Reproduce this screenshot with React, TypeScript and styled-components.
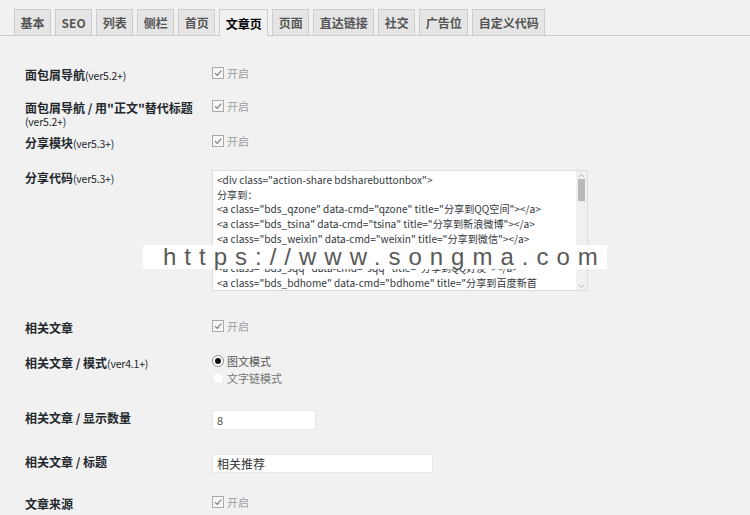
import React from 'react'
import styled, { createGlobalStyle } from 'styled-components'

const GlobalStyle = createGlobalStyle`
  html, body {
    margin: 0;
    padding: 0;
    background: #f1f1f1;
  }
  body {
    font-family: "Noto Sans CJK SC", "Noto Sans", sans-serif;
    color: #23282d;
  }
`

const Page = styled.div`
  position: relative;
  width: 750px;
  height: 515px;
  overflow: hidden;
  padding-top: 9px;
  box-sizing: border-box;
`

const TabBar = styled.nav`
  display: flex;
  gap: 4px;
  height: 26px;
  padding-left: 14px;
  border-bottom: 1px solid #ccc;
`

const Tab = styled.a<{ $active?: boolean }>`
  display: flex;
  align-items: center;
  height: ${p => (p.$active ? 27 : 26)}px;
  padding: 0 5.5px;
  box-sizing: border-box;
  border: 1px solid #ccc;
  border-bottom: none;
  background: ${p => (p.$active ? '#f1f1f1' : '#e5e5e5')};
  color: ${p => (p.$active ? '#000' : '#555')};
  font-size: 12px;
  font-weight: 700;
  text-decoration: none;
  white-space: nowrap;
`

const Form = styled.div`
  margin-top: 31px;
  padding-left: 25px;
`

const Row = styled.div<{ $h: number }>`
  display: grid;
  grid-template-columns: 187px 1fr;
  align-items: start;
  height: ${p => p.$h}px;
`

const Label = styled.div`
  padding-top: 1px;
  font-size: 12px;
  line-height: 13px;
  font-weight: 700;
  color: #23282d;
`

const Ver = styled.span`
  font-size: 10.5px;
  font-weight: 400;
  letter-spacing: -0.2px;
`

const CheckLabel = styled.label`
  display: inline-flex;
  align-items: center;
  gap: 3px;
  height: 12px;
  font-size: 11px;
  color: #a0a0a0;
`

const Box = styled.span`
  display: inline-flex;
  width: 12px;
  height: 12px;
  box-sizing: border-box;
  border: 1px solid #a7aaad;
  background: #f7f7f7;
`

const CodeBox = styled.div`
  display: flex;
  width: 376px;
  height: 121px;
  box-sizing: border-box;
  border: 1px solid #ddd;
  background: #fff;
`

const ShareCode = styled.textarea`
  flex: 1;
  min-width: 0;
  margin: 0;
  padding: 2px 24px 2px 4px;
  border: none;
  background: #fff;
  color: #32373c;
  font-family: "Noto Sans CJK SC", "Noto Sans", sans-serif;
  font-size: 10.15px;
  line-height: 14.7px;
  resize: none;
  outline: none;
  overflow: hidden;
`

const ScrollBar = styled.div`
  display: flex;
  flex-direction: column;
  align-items: center;
  width: 11px;
  background: #f0f0f0;
`

const ScrollArrow = styled.span`
  display: flex;
  align-items: center;
  justify-content: center;
  height: 8px;
  width: 11px;
`

const ScrollThumb = styled.span`
  width: 7px;
  height: 22px;
  background: #b9b9b9;
`

const ScrollTrack = styled.span`
  flex: 1;
`

const RadioGroup = styled.div`
  display: flex;
  flex-direction: column;
  gap: 5px;
`

const RadioOption = styled.label<{ $faded?: boolean }>`
  display: inline-flex;
  align-items: center;
  gap: 3px;
  height: 12px;
  font-size: 11px;
  color: ${p => (p.$faded ? '#777' : '#555')};
`

const Dot = styled.span<{ $on?: boolean }>`
  display: inline-flex;
  align-items: center;
  justify-content: center;
  width: 12px;
  height: 12px;
  box-sizing: border-box;
  border-radius: 50%;
  border: 1px solid ${p => (p.$on ? '#8c8f94' : '#ececec')};
  background: #fff;

  &::after {
    content: '';
    width: 6px;
    height: 6px;
    border-radius: 50%;
    background: ${p => (p.$on ? '#111' : 'transparent')};
  }
`

const TextInput = styled.input<{ $w: number; $big?: boolean }>`
  display: block;
  width: ${p => p.$w}px;
  height: ${p => (p.$big ? 19 : 20)}px;
  box-sizing: border-box;
  margin: 0;
  padding: 0 4px;
  border: 1px solid #e6e6e6;
  background: #fff;
  color: ${p => (p.$big ? '#333' : '#555')};
  font-family: "Noto Sans CJK SC", "Noto Sans", sans-serif;
  font-size: ${p => (p.$big ? 12 : 11)}px;
  outline: none;
`

const Watermark = styled.div`
  position: absolute;
  left: 143px;
  top: 245px;
  width: 464px;
  height: 24px;
  padding-left: 20px;
  box-sizing: border-box;
  background: #fff;
  color: #5a5a5a;
  font-family: "Liberation Sans", Arial, sans-serif;
  font-size: 24px;
  line-height: 24px;
  letter-spacing: 8px;
  white-space: nowrap;
`

const tabs = ['基本', 'SEO', '列表', '侧栏', '首页', '文章页', '页面', '直达链接', '社交', '广告位', '自定义代码']

const shareCode = `<div class="action-share bdsharebuttonbox">
分享到：
<a class="bds_qzone" data-cmd="qzone" title="分享到QQ空间"></a>
<a class="bds_tsina" data-cmd="tsina" title="分享到新浪微博"></a>
<a class="bds_weixin" data-cmd="weixin" title="分享到微信"></a>
<a class="bds_tqq" data-cmd="tqq" title="分享到腾讯微博"></a>
<a class="bds_sqq" data-cmd="sqq" title="分享到QQ好友"></a>
<a class="bds_bdhome" data-cmd="bdhome" title="分享到百度新首页"></a>
<a class="bds_tqf" data-cmd="tqf" title="分享到腾讯朋友"></a>
<a class="bds_youdao" data-cmd="youdao" title="分享到有道云笔记"></a>
<a class="bds_more" data-cmd="more">更多</a>
</div>`

const Check: React.FC = () => (
  <CheckLabel>
    <Box>
      <svg width="10" height="10" viewBox="0 0 10 10">
        <polyline points="2,5.2 4.2,7.4 8.2,2.6" fill="none" stroke="#7a7a7a" strokeWidth="1.1" />
      </svg>
    </Box>
    开启
  </CheckLabel>
)

const Arrow: React.FC<{ down?: boolean }> = ({ down }) => (
  <ScrollArrow>
    <svg width="7" height="5" viewBox="0 0 7 5">
      <polyline
        points={down ? '1,1 3.5,3.5 6,1' : '1,4 3.5,1.5 6,4'}
        fill="none"
        stroke="#b0b0b0"
        strokeWidth="1"
      />
    </svg>
  </ScrollArrow>
)

const App: React.FC = () => {
  return (
    <>
      <GlobalStyle />
      <Page>
        <TabBar>
          {tabs.map(t => (
            <Tab key={t} $active={t === '文章页'}>
              {t}
            </Tab>
          ))}
        </TabBar>
        <Form>
          <Row $h={33}>
            <Label>
              面包屑导航<Ver>(ver5.2+)</Ver>
            </Label>
            <Check />
          </Row>
          <Row $h={35}>
            <Label>
              面包屑导航 / 用"正文"替代标题
              <br />
              <Ver>(ver5.2+)</Ver>
            </Label>
            <Check />
          </Row>
          <Row $h={35}>
            <Label>
              分享模块<Ver>(ver5.3+)</Ver>
            </Label>
            <Check />
          </Row>
          <Row $h={150}>
            <Label>
              分享代码<Ver>(ver5.3+)</Ver>
            </Label>
            <CodeBox>
              <ShareCode defaultValue={shareCode} spellCheck={false} />
              <ScrollBar>
                <Arrow />
                <ScrollThumb />
                <ScrollTrack />
                <Arrow down />
              </ScrollBar>
            </CodeBox>
          </Row>
          <Row $h={35}>
            <Label>相关文章</Label>
            <Check />
          </Row>
          <Row $h={55}>
            <Label>
              相关文章 / 模式<Ver>(ver4.1+)</Ver>
            </Label>
            <RadioGroup>
              <RadioOption>
                <Dot $on />
                图文模式
              </RadioOption>
              <RadioOption $faded>
                <Dot />
                文字链模式
              </RadioOption>
            </RadioGroup>
          </Row>
          <Row $h={44}>
            <Label>相关文章 / 显示数量</Label>
            <TextInput $w={104} defaultValue="8" />
          </Row>
          <Row $h={42}>
            <Label>相关文章 / 标题</Label>
            <TextInput $w={221} $big defaultValue="相关推荐" />
          </Row>
          <Row $h={30}>
            <Label>文章来源</Label>
            <Check />
          </Row>
        </Form>
        <Watermark>https://www.songma.com</Watermark>
      </Page>
    </>
  )
}

export default App
